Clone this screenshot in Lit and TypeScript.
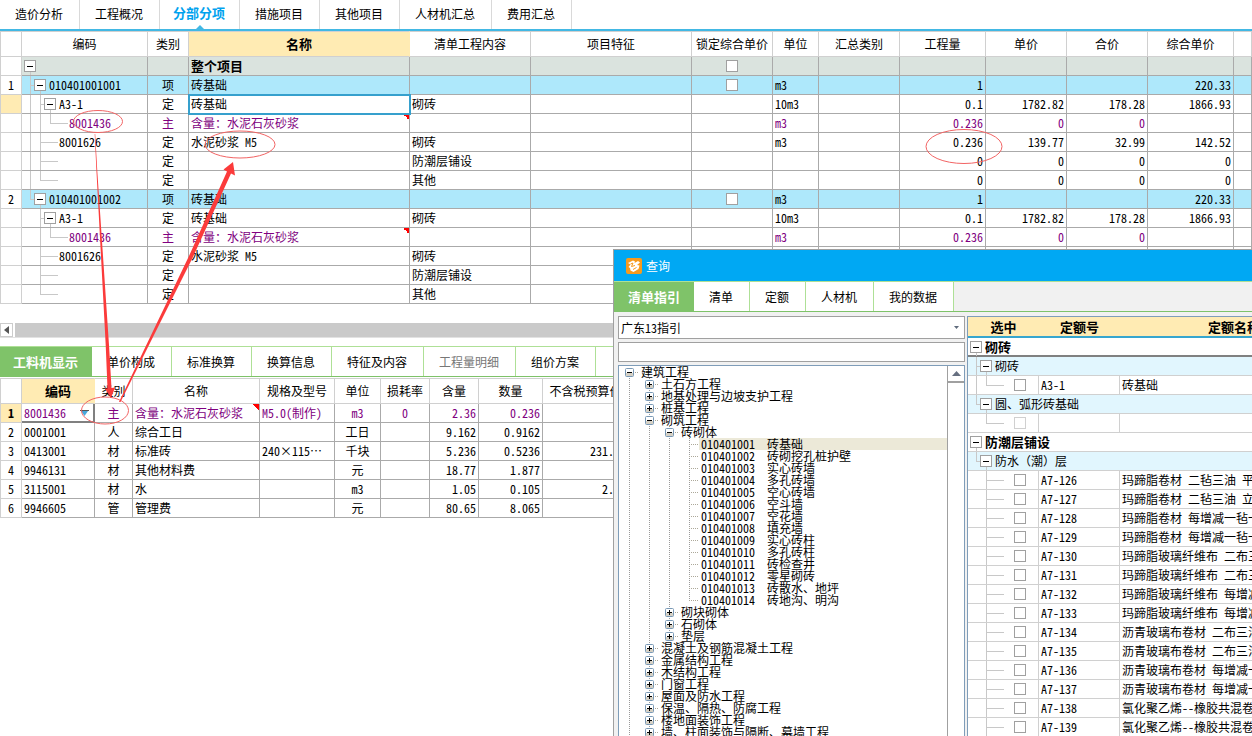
import { LitElement, html, svg, css, nothing } from "lit";
import { customElement, state } from "lit/decorators.js";
import { classMap } from "lit/directives/class-map.js";

interface Guide {
  depth: number;
  lines: string;
  toggle?: boolean;
}

interface BillRow extends Guide {
  no?: string;
  kind?: "root" | "item" | "material";
  code?: string;
  type?: string;
  name?: string;
  work?: string;
  unit?: string;
  nums?: string[];
  check?: boolean;
  current?: boolean;
}

/* Guide codes: v<n> full line of level n, t<n> top half, b<n> below the toggle,
   s<n> short branch to a toggle, l<n> long branch to a leaf. */
const childRows = (open: boolean): BillRow[] => {
  const v = open ? "v0 " : "";
  return [
    { depth: 2, lines: v + "v1 s1 b2", toggle: true, code: "A3-1", type: "定", name: "砖基础", work: "砌砖", unit: "10m3", nums: ["0.1", "1782.82", "178.28", "1866.93"], current: open },
    { depth: 3, lines: v + "v1 t2 l2", kind: "material", code: "8001436", type: "主", name: "含量：水泥石灰砂浆", unit: "m3", nums: ["0.236", "0", "0", ""] },
    { depth: 2, lines: v + "v1 l1", code: "8001626", type: "定", name: "水泥砂浆 M5", work: "砌砖", unit: "m3", nums: ["0.236", "139.77", "32.99", "142.52"] },
    { depth: 2, lines: v + "v1 l1", type: "定", work: "防潮层铺设", nums: ["0", "0", "0", "0"] },
    { depth: 2, lines: v + "t1 l1", type: "定", work: "其他", nums: ["0", "0", "0", "0"] },
  ];
};

const BILL: BillRow[] = [
  { depth: 0, lines: "b0", toggle: true, kind: "root", name: "整个项目", check: true },
  { depth: 1, lines: "v0 s0 b1", toggle: true, no: "1", kind: "item", code: "010401001001", type: "项", name: "砖基础", unit: "m3", nums: ["1", "", "", "220.33"], check: true },
  ...childRows(true),
  { depth: 1, lines: "t0 s0 b1", toggle: true, no: "2", kind: "item", code: "010401001002", type: "项", name: "砖基础", unit: "m3", nums: ["1", "", "", "220.33"], check: true },
  ...childRows(false),
];

const RESOURCES = [
  ["8001436", "主", "含量：水泥石灰砂浆", "M5.0(制作)", "m3", "0", "2.36", "0.236", ""],
  ["0001001", "人", "综合工日", "", "工日", "", "9.162", "0.9162", ""],
  ["0413001", "材", "标准砖", "240×115…", "千块", "", "5.236", "0.5236", "231.00"],
  ["9946131", "材", "其他材料费", "", "元", "", "18.77", "1.877", ""],
  ["3115001", "材", "水", "", "m3", "", "1.05", "0.105", "2.00"],
  ["9946605", "管", "管理费", "", "元", "", "80.65", "8.065", ""],
];

interface Node {
  depth: number;
  text: string;
  code?: string;
  open?: boolean;
}

const LEAVES = [
  "砖基础", "砖砌挖孔桩护壁", "实心砖墙", "多孔砖墙", "空心砖墙", "空斗墙", "空花墙",
  "填充墙", "实心砖柱", "多孔砖柱", "砖检查井", "零星砌砖", "砖散水、地坪", "砖地沟、明沟",
];

const TREE: Node[] = [
  { depth: 0, text: "建筑工程", open: true },
  { depth: 1, text: "土石方工程" },
  { depth: 1, text: "地基处理与边坡支护工程" },
  { depth: 1, text: "桩基工程" },
  { depth: 1, text: "砌筑工程", open: true },
  { depth: 2, text: "砖砌体", open: true },
  ...LEAVES.map((text, i) => ({ depth: 3, text, code: String(10401001 + i).padStart(9, "0") })),
  { depth: 2, text: "砌块砌体" },
  { depth: 2, text: "石砌体" },
  { depth: 2, text: "垫层" },
  ...["混凝土及钢筋混凝土工程", "金属结构工程", "木结构工程", "门窗工程", "屋面及防水工程",
    "保温、隔热、防腐工程", "楼地面装饰工程", "墙、柱面装饰与隔断、幕墙工程"].map((text) => ({ depth: 1, text })),
];

interface QuotaRow extends Guide {
  group?: "major" | "minor";
  code?: string;
  text: string;
  disabled?: boolean;
}

const WATERPROOF = [
  "玛蹄脂卷材 二毡三油 平面", "玛蹄脂卷材 二毡三油 立面",
  "玛蹄脂卷材 每增减一毡一油", "玛蹄脂卷材 每增减一毡一油",
  "玛蹄脂玻璃纤维布 二布三油", "玛蹄脂玻璃纤维布 二布三油",
  "玛蹄脂玻璃纤维布 每增减一布", "玛蹄脂玻璃纤维布 每增减一布",
  "沥青玻璃布卷材 二布三油", "沥青玻璃布卷材 二布三油",
  "沥青玻璃布卷材 每增减一布", "沥青玻璃布卷材 每增减一布",
  "氯化聚乙烯--橡胶共混卷材", "氯化聚乙烯--橡胶共混卷材",
];

const QUOTAS: QuotaRow[] = [
  { depth: 0, lines: "b0", toggle: true, group: "major", text: "砌砖" },
  { depth: 1, lines: "v0 s0 b1", toggle: true, group: "minor", text: "砌砖" },
  { depth: 2, lines: "v0 t1 l1", code: "A3-1", text: "砖基础" },
  { depth: 1, lines: "t0 s0 b1", toggle: true, group: "minor", text: "圆、弧形砖基础" },
  { depth: 2, lines: "t1 l1", code: "", text: "", disabled: true },
  { depth: 0, lines: "b0", toggle: true, group: "major", text: "防潮层铺设" },
  { depth: 1, lines: "t0 s0 b1", toggle: true, group: "minor", text: "防水（潮）层" },
  ...WATERPROOF.map((text, i) => ({ depth: 2, lines: "v1 l1", code: `A7-${126 + i}`, text })),
];

const segment = (token: string): string => {
  const x = 8 + 10 * Number(token[1]);
  switch (token[0]) {
    case "v": return `M${x}.5 0V18`;
    case "t": return `M${x}.5 0V10`;
    case "b": return `M${x}.5 15V18`;
    case "s": return `M${x} 9.5H${x + 4}`;
    default: return `M${x} 9.5H${x + 18}`;
  }
};

const branch = (g: Guide, label: string) => {
  const width = 17 + 10 * g.depth;
  return html`<span class="branch">
    <svg width=${width} height="18" aria-hidden="true">
      <path d=${g.lines.split(" ").map(segment).join("")} stroke="#c8c8c8" fill="none" />
    </svg>
    ${g.toggle ? html`<button class="toggle" aria-label=${"折叠 " + label}></button>` : nothing}
  </span>`;
};

@customElement("app-root")
export class AppRoot extends LitElement {
  @state() private mainTab = "分部分项";
  @state() private detailTab = "工料机显示";
  @state() private queryTab = "清单指引";
  @state() private picked = "010401001";

  static styles = css`
    :host {
      display: block;
      position: relative;
      height: 100vh;
      overflow: hidden;
      background: #fff;
      color: #000;
      font: 12px/18px "Noto Sans CJK SC", sans-serif;
      font-feature-settings: "hwid" 1;
    }
    *, *::before, *::after { box-sizing: border-box; }
    button, input, select { font: inherit; font-feature-settings: inherit; color: inherit; margin: 0; border-radius: 0; }
    button { padding: 0; border: 0; background: none; }
    svg { display: block; }

    .tabs { display: flex; white-space: nowrap; overflow: hidden; }
    .tab { flex: none; padding: 0 16px 0 15px; border-right: 1px solid #d9d9d9; }
    .main-tabs { height: 31px; border-bottom: 2px solid #42b8e4; }
    .main-tabs .tab { padding-bottom: 2px; }
    .main-tabs .tab.active {
      position: relative;
      padding: 0 14px 4px 13px;
      color: #00a2ee;
      font-size: 13px;
      font-weight: bold;
    }
    .main-tabs .tab.active::after {
      content: "";
      position: absolute;
      left: calc(50% - 4px);
      bottom: 0;
      border: 4px solid transparent;
      border-top: 0;
      border-bottom-color: #42b8e4;
    }
    .green-tabs { height: 31px; border-top: 1px solid #aee096; border-bottom: 1px solid #7ec269; }
    .green-tabs .tab { background: #fff; border-right-color: #aee096; }
    .green-tabs .tab.active {
      padding: 0 14px 0 13px;
      border-right: 0;
      background: #7fc369;
      color: #fff;
      font-size: 13px;
      font-weight: bold;
    }
    .green-tabs .tab.dim { color: #777; }

    table { width: 100%; table-layout: fixed; border-collapse: separate; border-spacing: 0; white-space: nowrap; }
    th, td { padding: 0 2px; overflow: hidden; }
    th { font-weight: normal; text-align: center; }
    td { height: 19px; border-right: 1px solid #aaa; border-bottom: 1px solid #aaa; }
    thead th { height: 26px; border: 0 solid #d0d0d0; border-width: 1px 1px 1px 0; }
    thead th.on { background: #ffebb3; border-right-color: #ffebb3; font-size: 13px; font-weight: bold; }
    .rowno { border: 0 solid #d0d0d0; border-width: 0 1px 1px 1px; padding: 0; }
    thead .rowno { border-top-width: 1px; }
    .rowno.on { background: #ffebb3; }
    .material .rowno.strong { color: #000; font-weight: bold; }
    .center { text-align: center; }
    .right { text-align: right; }
    .tree-cell { padding: 0; }
    .tree-line { display: flex; height: 18px; align-items: center; }
    .branch { display: grid; flex: none; align-items: center; }
    .branch > * { grid-area: 1 / 1; }
    .toggle {
      justify-self: end;
      width: 12px;
      height: 12px;
      margin-right: 3px;
      border: 1px solid #a0a0a0;
      background: linear-gradient(#000, #000) center / 6px 1px no-repeat #fff;
    }
    .check {
      display: block;
      appearance: none;
      width: 12px;
      height: 12px;
      border: 1px solid #a0a0a0;
      background: #fff;
    }
    .check:disabled { border-color: #d0d0d0; }
    .center .check { margin: 0 auto; }

    .root td { background: #dae3de; }
    .root td.rowno, .item td.rowno { background: #fff; }
    .item td { background: #aee8fb; }
    .root .name { font-size: 13px; font-weight: bold; }
    .material td { color: #800080; }
    .note { background: linear-gradient(to top right, transparent 50%, #f00 50%) right top / 6px 6px no-repeat; }
    .name.current { outline: 2px solid #36a0cd; outline-offset: -1px; }

    .hscroll { display: flex; gap: 2px; height: 15px; margin: 19px 0 8px; border-bottom: 1px solid #e2e2e2; }
    .hscroll button { display: grid; place-items: center; width: 13px; height: 14px; border: 1px solid #ccc; }
    .thumb { flex: 1; background: #cacaca; }

    .detail { margin-top: 1px; }
    .detail .editing { border-color: #808080; box-shadow: inset -1px -1px #808080; }
    .editing div { display: flex; align-items: center; justify-content: space-between; padding-right: 3px; }
    .c-no { width: 22px; }
    .c-code { width: 126px; }
    .c-type { width: 41px; }
    .c-name { width: 221px; }
    .c-work { width: 121px; }
    .c-feature { width: 161px; }
    .c-mid { width: 81px; }
    .c-unit { width: 46px; }
    .c-wide { width: 86px; }
    .d-code { width: 73px; }
    .d-type { width: 38px; }
    .d-name { width: 127px; }
    .d-spec { width: 75px; }
    .d-rate { width: 49px; }
    .d-qty { width: 64px; }
    .d-price { width: 86px; }

    .window {
      position: absolute;
      left: 613px;
      top: 249px;
      right: 0;
      bottom: 0;
      display: flex;
      flex-direction: column;
      border: solid #a0a0a0;
      border-width: 1px 0 0 1px;
      background: #f1f1f1;
    }
    .title { display: flex; align-items: center; gap: 4px; height: 31px; padding-left: 12px; background: #00a8f3; color: #fff; font-weight: normal; font-size: 12px; margin: 0; }
    .window .green-tabs { flex: none; }
    .window .green-tabs .tab.active { padding: 0 14px; }
    .panes { display: flex; flex: 1; min-height: 0; gap: 2px; padding: 4px 0 0 4px; }
    .left { display: flex; flex: none; flex-direction: column; width: 347px; }
    .combo { display: grid; align-items: center; height: 23px; margin-bottom: 3px; border: 1px solid #a0a0a0; background: #fff; }
    .combo > * { grid-area: 1 / 1; }
    .combo select { appearance: none; width: 100%; height: 21px; padding: 0 2px; border: 0; background: none; }
    .combo svg { justify-self: end; margin-right: 5px; pointer-events: none; }
    .search { width: 100%; height: 20px; margin-bottom: 3px; border: 1px solid #a0a0a0; background: #fff; }
    .tree-box { display: flex; flex: 1; min-height: 0; overflow: hidden; border: solid #7f9db9; border-width: 1px 1px 0; background: #fff; }
    .tree { flex: 1; margin: 0; padding: 0; list-style: none; line-height: 12px; white-space: nowrap; }
    .node { display: flex; height: 12px; }
    .stem { display: grid; flex: none; }
    .stem > * { grid-area: 1 / 1; }
    .knob { justify-self: end; width: 9px; height: 9px; margin: 2px 5px 0 0; }
    .label { flex: 1; display: flex; gap: 12px; padding-left: 2px; }
    .label.sel { background: #ece9d8; }
    .vscroll { flex: none; width: 17px; border-left: 1px solid #a0a0a0; }
    .vscroll button { display: grid; place-items: center; width: 16px; height: 17px; border-bottom: 2px solid #a0a0a0; }

    .quota { flex: 1; min-width: 0; overflow: hidden; border: solid #7f9db9; border-width: 1px 0 0 1px; background: #fff; }
    .quota table { width: 380px; }
    .quota thead th { height: 21px; border: 0; border-bottom: 2px solid #36a6cf; background: #ffebb3; font-size: 13px; font-weight: bold; }
    .quota td { border-color: #d0d0d0; }
    .quota .major td { font-size: 13px; font-weight: bold; }
    .quota .major.first td { border-bottom-color: #808080; box-shadow: inset 0 -1px #808080; }
    .quota .minor td { background: #e1f6fe; font-feature-settings: normal; }
    .q-pick { width: 71px; }
    .q-code { width: 81px; }
    .leaf { display: flex; align-items: center; height: 18px; }
    .leaf .branch { width: 46px; }

    .marks { position: absolute; left: 0; top: 0; width: 100%; height: 100%; pointer-events: none; }
  `;

  private tabs(cls: string, names: string[], current: string, pick: (n: string) => void, dim = "") {
    return html`<nav class="tabs ${cls}">
      ${names.map((n) => html`<button class=${classMap({ tab: true, active: n === current, dim: n === dim })} @click=${() => pick(n)}>${n}</button>`)}
    </nav>`;
  }

  private billRow(r: BillRow) {
    const nums = r.nums ?? ["", "", "", ""];
    return html`<tr class=${r.kind ?? ""}>
      <td class=${classMap({ rowno: true, center: true, on: !!r.current })}>${r.no}</td>
      <td class="tree-cell"><div class="tree-line">${branch(r, r.code ?? r.name ?? "")}${r.code}</div></td>
      <td class="center">${r.type}</td>
      <td class=${classMap({ name: true, current: !!r.current, note: r.kind === "material" })}>${r.name}</td>
      <td>${r.work}</td>
      <td></td>
      <td class="center">${r.check ? html`<input class="check" type="checkbox" aria-label=${"锁定综合单价 " + (r.code ?? r.name)} />` : nothing}</td>
      <td>${r.unit}</td>
      <td></td>
      ${nums.map((n) => html`<td class="right">${n}</td>`)}
      <td></td>
    </tr>`;
  }

  private bill() {
    return html`<table>
      <colgroup>
        <col class="c-no" /><col class="c-code" /><col class="c-type" /><col class="c-name" /><col class="c-work" />
        <col class="c-feature" /><col class="c-mid" /><col class="c-unit" /><col class="c-mid" /><col class="c-wide" />
        <col class="c-mid" /><col class="c-mid" /><col class="c-wide" /><col />
      </colgroup>
      <thead>
        <tr>
          <th class="rowno"></th>
          ${["编码", "类别", "名称", "清单工程内容", "项目特征", "锁定综合单价", "单位", "汇总类别", "工程量", "单价", "合价", "综合单价", ""].map(
            (h) => html`<th class=${h === "名称" ? "on" : ""}>${h}</th>`,
          )}
        </tr>
      </thead>
      <tbody>${BILL.map((r) => this.billRow(r))}</tbody>
    </table>`;
  }

  private resources() {
    const align = ["", "center", "", "", "center", "center", "right", "right", "right"];
    return html`<table class="detail">
      <colgroup>
        <col class="c-no" /><col class="d-code" /><col class="d-type" /><col class="d-name" /><col class="d-spec" />
        <col class="c-unit" /><col class="d-rate" /><col class="d-rate" /><col class="d-qty" /><col class="d-price" /><col />
      </colgroup>
      <thead>
        <tr>
          <th class="rowno"></th>
          ${["编码", "类别", "名称", "规格及型号", "单位", "损耗率", "含量", "数量", "不含税预算价", ""].map(
            (h) => html`<th class=${h === "编码" ? "on" : ""}>${h}</th>`,
          )}
        </tr>
      </thead>
      <tbody>
        ${RESOURCES.map((r, i) => html`<tr class=${i ? "" : "material"}>
          <td class=${classMap({ rowno: true, center: true, on: !i, strong: !i })}>${i + 1}</td>
          ${r.map((c, k) =>
            !i && !k
              ? html`<td class="editing"><div>${c}<svg width="9" height="6"><path d="M0 .5H9" stroke="#555" /><path d="M1 1H8L4.5 6Z" fill="#4aa8dc" /></svg></div></td>`
              : html`<td class="${align[k]} ${!i && k === 2 ? "note" : ""}">${c}</td>`,
          )}
          <td></td>
        </tr>`)}
      </tbody>
    </table>`;
  }

  private treeNode(n: Node) {
    const width = 20 + 20 * n.depth;
    const last = n.code === "010401014" || n.text === "垫层";
    const own = 10 + 20 * n.depth;
    const rails = [];
    for (let d = 0; d < n.depth; d++) rails.push(`M${10 + 20 * d}.5 0V12`);
    rails.push(n.depth === 0 ? `M${own}.5 6V12` : `M${own}.5 0V${last ? 7 : 12}`);
    const full = n.code ? html`<span>${n.code}</span><span>${n.text}</span>` : html`<span>${n.text}</span>`;
    return html`<li class="node">
      <span class="stem">
        <svg width=${width} height="12" aria-hidden="true">
          <path d=${rails.join("")} stroke="#999" stroke-dasharray="1 1" />
          <path d=${`M${own} 6.5H${width}`} stroke="#aca899" stroke-dasharray="1 1" />
        </svg>
        ${n.code
          ? nothing
          : html`<button class="knob" aria-label=${(n.open ? "折叠 " : "展开 ") + n.text}>
              <svg width="9" height="9">
                <rect x=".5" y=".5" width="8" height="8" rx="1" fill="#fff" stroke="#7898b5" />
                <rect x="1" y="5" width="7" height="3" fill="#d5d0c4" />
                <path d=${n.open ? "M2 4.5H7" : "M2 4.5H7M4.5 2V7"} stroke="#000" />
              </svg>
            </button>`}
      </span>
      <span class=${classMap({ label: true, sel: n.code === this.picked })} @click=${() => n.code && (this.picked = n.code)}>${full}</span>
    </li>`;
  }

  private quotaRow(q: QuotaRow, i: number) {
    if (q.group) {
      return html`<tr class="${q.group} ${i ? "" : "first"}">
        <td class="tree-cell" colspan="3"><div class="tree-line">${branch(q, q.text)}${q.text}</div></td>
      </tr>`;
    }
    return html`<tr>
      <td class="tree-cell"><div class="leaf">${branch(q, q.text)}<input class="check" type="checkbox" aria-label=${"选中 " + q.code} ?disabled=${!!q.disabled} /></div></td>
      <td>${q.code}</td>
      <td>${q.text}</td>
    </tr>`;
  }

  private query() {
    return html`<section class="window" aria-label="查询">
      <h2 class="title">
        <svg width="16" height="16" aria-hidden="true">
          <rect width="16" height="16" rx="2" fill="#f79a1c" />
          <path d="M2 5L7 2.500L9 3.500L8.500 5L12 3L14 4.500L11 7L13.500 7.500L12.500 11L7.500 14L4.500 12.500L4 10L2.500 9L4.500 6.500Z" fill="#fff" />
          <path d="M4.500 6L7 5L5.500 8.500L9 7.500M7 11.500L10.500 9.500" fill="none" stroke="#f79a1c" />
        </svg>
        查询
      </h2>
      ${this.tabs("green-tabs", ["清单指引", "清单", "定额", "人材机", "我的数据"], this.queryTab, (n) => (this.queryTab = n))}
      <div class="panes">
        <div class="left">
          <div class="combo">
            <select aria-label="指引库"><option>广东13指引</option></select>
            <svg width="5" height="3" aria-hidden="true"><path d="M0 0H5L2.500 3Z" fill="#5f6b7c" /></svg>
          </div>
          <input class="search" type="text" aria-label="搜索" />
          <div class="tree-box">
            <ul class="tree">${TREE.map((n) => this.treeNode(n))}</ul>
            <div class="vscroll">
              <button aria-label="向上滚动"><svg width="9" height="5"><path d="M0 5H9L4.500 0Z" fill="#666f80" /></svg></button>
            </div>
          </div>
        </div>
        <div class="quota">
          <table>
            <colgroup><col class="q-pick" /><col class="q-code" /><col /></colgroup>
            <thead><tr><th>选中</th><th>定额号</th><th>定额名称</th></tr></thead>
            <tbody>${QUOTAS.map((q, i) => this.quotaRow(q, i))}</tbody>
          </table>
        </div>
      </div>
    </section>`;
  }

  private marks() {
    const rings = [[98, 121.5, 24.5, 11], [240, 144.500, 35, 13.500], [964, 146.500, 38, 17], [105, 410.500, 23.500, 13.500]];
    return html`<svg class="marks" aria-hidden="true">
      ${rings.map(([cx, cy, rx, ry]) => svg`<ellipse cx=${cx} cy=${cy} rx=${rx} ry=${ry} fill="none" stroke="#f26464" />`)}
      <path d="M94.700 134L95.200 134L97.200 170L109 345L111.500 388L115 387.500L111 398L105 388.500L107.500 388.500L105.700 345L96.400 170Z" fill="#fb3b3b" />
      <path d="M119 402L120.500 402L192.500 258L231 173.500L235 175.500L233 162L223.500 169.500L227 171.500L189 256Z" fill="#fb3b3b" />
    </svg>`;
  }

  render() {
    return html`
      ${this.tabs("main-tabs", ["造价分析", "工程概况", "分部分项", "措施项目", "其他项目", "人材机汇总", "费用汇总"], this.mainTab, (n) => (this.mainTab = n))}
      ${this.bill()}
      <div class="hscroll">
        <button aria-label="向左滚动"><svg width="5" height="8"><path d="M5 0V8L0 4Z" fill="#555" /></svg></button>
        <div class="thumb"></div>
      </div>
      ${this.tabs("green-tabs", ["工料机显示", "单价构成", "标准换算", "换算信息", "特征及内容", "工程量明细", "组价方案"], this.detailTab, (n) => (this.detailTab = n), "工程量明细")}
      ${this.resources()}
      ${this.query()}
      ${this.marks()}
    `;
  }
}
